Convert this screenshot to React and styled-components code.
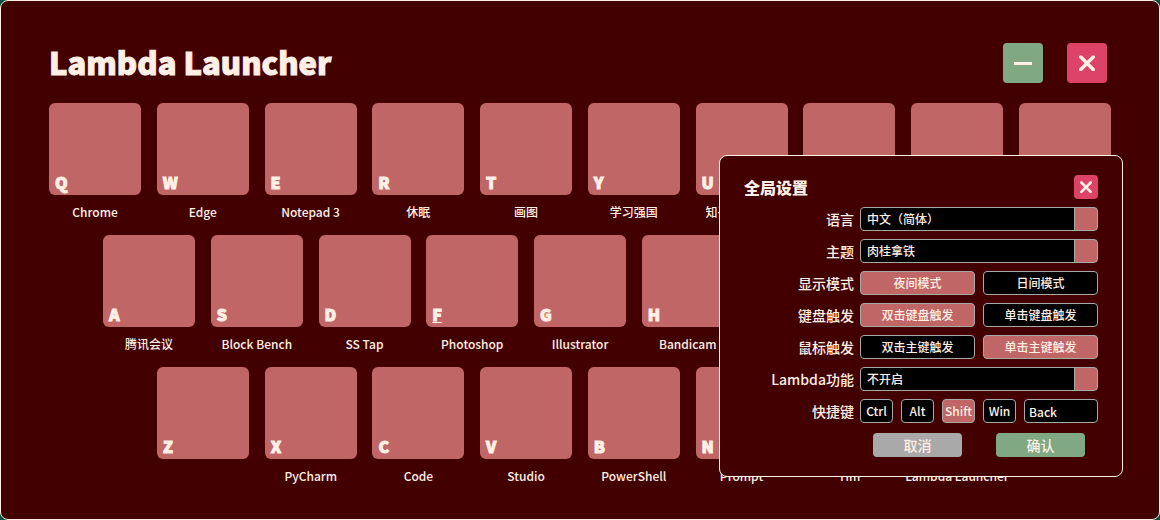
import React, { useState } from "react";
import styled, { createGlobalStyle, css } from "styled-components";

const color = {
  desktop: "#00543f",
  bg: "#420000",
  text: "#ffefe4",
  tile: "#c16666",
  green: "#7fa883",
  red: "#dd4267",
  grey: "#a9a9a9",
  field: "#000000",
};

const GlobalStyle = createGlobalStyle`
  *, *::before, *::after { box-sizing: border-box; }
  body {
    margin: 0;
    background: ${color.desktop};
    color: ${color.text};
    font-family: "Noto Sans CJK SC", "Noto Sans", sans-serif;
    font-size: 12px;
  }
  button, select, input { font: inherit; color: inherit; margin: 0; }
`;

const heavyText = css`
  font-weight: 900;
  -webkit-text-stroke: 1px currentColor;
  paint-order: stroke fill;
`;

const Window = styled.div`
  position: relative;
  min-height: 100vh;
  padding: 42px 48px 24px;
  background: ${color.bg};
  border: 1px solid ${color.text};
  border-radius: 8px;
  overflow: hidden;
`;

const TitleBar = styled.header`
  display: flex;
  align-items: flex-start;
  justify-content: space-between;
  height: 40px;
  margin-bottom: 20px;
  padding-right: 4px;
`;

const Title = styled.h1`
  ${heavyText}
  margin: 0;
  font-size: 31px;
  line-height: 38px;
  white-space: nowrap;
`;

const WindowControls = styled.div`
  display: flex;
  gap: 24px;
`;

const IconButton = styled.button`
  display: grid;
  place-items: center;
  width: ${(p) => p.$size}px;
  height: ${(p) => p.$size}px;
  padding: 0;
  border: 0;
  border-radius: 4px;
  background: ${(p) => color[p.$tone]};
  cursor: pointer;
`;

const Keyboard = styled.main`
  display: flex;
  flex-direction: column;
  gap: 13px;
`;

const KeyRow = styled.div`
  display: flex;
  justify-content: space-between;
  padding: 0 ${(p) => p.$indent * 54}px;
`;

const KeyCell = styled.div`
  display: flex;
  flex-direction: column;
  align-items: center;
  gap: 7px;
  width: 92px;
`;

const KeyTile = styled.button`
  ${heavyText}
  display: flex;
  align-items: flex-end;
  width: 92px;
  height: 92px;
  padding: 0 6px 3px;
  border: 0;
  border-radius: 6px;
  background: ${color.tile};
  font-size: 16px;
  line-height: 20px;
  cursor: pointer;
`;

const Letter = styled.span`
  ${(p) => p.$home && css`text-decoration: underline;`}
`;

const KeyName = styled.span`
  height: 20px;
  line-height: 20px;
  font-weight: 500;
  white-space: nowrap;
`;

const Dialog = styled.section`
  position: absolute;
  right: 36px;
  bottom: 42px;
  width: 404px;
  padding: 19px 24px;
  background: ${color.bg};
  border: 1px solid ${color.text};
  border-radius: 8px;
`;

const DialogHeader = styled.div`
  display: flex;
  align-items: center;
  justify-content: space-between;
  margin-bottom: 8px;
`;

const DialogTitle = styled.h2`
  margin: 0;
  font-size: 16px;
  line-height: 24px;
  font-weight: 900;
`;

const Form = styled.form`
  display: flex;
  flex-direction: column;
  gap: 8px;
`;

const Field = styled.div`
  display: grid;
  grid-template-columns: 1fr 238px;
  column-gap: 6px;
`;

const labelText = css`
  font-size: 14px;
  line-height: 24px;
  font-weight: 500;
  text-align: right;
`;

const FieldLabel = styled.label`
  ${labelText}
`;

const GroupLabel = styled.span`
  ${labelText}
`;

const control = css`
  height: 24px;
  border: 1px solid ${color.grey};
  border-radius: 4px;
  font-size: 12px;
  line-height: 22px;
  font-weight: 500;
`;

const Select = styled.select`
  ${control}
  appearance: none;
  width: 100%;
  padding: 0 30px 0 6px;
  background: linear-gradient(
    to left,
    ${color.tile} 22px,
    ${color.grey} 22px 23px,
    ${color.field} 23px
  );
`;

const Options = styled.div`
  display: flex;
  gap: 8px;
`;

const Choice = styled.button`
  ${control}
  flex: ${(p) => (p.$compact ? "0 0 33px" : "1")};
  padding: 0;
  background: ${(p) => (p.$active ? color.tile : color.field)};
  white-space: nowrap;
  cursor: pointer;
`;

const KeyInput = styled.input`
  ${control}
  flex: 1;
  min-width: 0;
  padding: 0 4px;
  background: ${color.field};
`;

const Actions = styled.div`
  display: flex;
  gap: 34px;
  width: 238px;
  margin: 2px 0 0 auto;
  padding: 0 13px;
`;

const ActionButton = styled.button`
  flex: 1;
  height: 24px;
  padding: 0;
  border: 0;
  border-radius: 4px;
  background: ${(p) => color[p.$tone]};
  font-size: 14px;
  line-height: 24px;
  font-weight: 500;
  cursor: pointer;
`;

function CrossIcon({ size }) {
  return (
    <svg width={size} height={size} viewBox="0 0 16 16" aria-hidden="true">
      <path d="M1.8 2 14.2 14.6M14.2 2 1.8 14.6" stroke={color.text} strokeWidth="3.5" strokeLinecap="round" />
    </svg>
  );
}

function MinusIcon() {
  return (
    <svg width="18" height="18" viewBox="0 0 18 18" aria-hidden="true">
      <rect x="0" y="8" width="18" height="3" fill={color.text} />
    </svg>
  );
}

const rows = [
  [
    ["Q", "Chrome"], ["W", "Edge"], ["E", "Notepad 3"], ["R", "休眠"], ["T", "画图"],
    ["Y", "学习强国"], ["U", "知乎日报助手"], ["I", ""], ["O", ""], ["P", ""],
  ],
  [
    ["A", "腾讯会议"], ["S", "Block Bench"], ["D", "SS Tap"], ["F", "Photoshop"],
    ["G", "Illustrator"], ["H", "Bandicam"], ["J", ""], ["K", ""], ["L", ""],
  ],
  [
    ["Z", ""], ["X", "PyCharm"], ["C", "Code"], ["V", "Studio"], ["B", "PowerShell"],
    ["N", "Prompt"], ["M", "Tim"], ["", "Lambda Launcher"],
  ],
];

function SelectField({ id, label, value }) {
  return (
    <Field>
      <FieldLabel htmlFor={id}>{label}</FieldLabel>
      <Select id={id} defaultValue={value}>
        <option>{value}</option>
      </Select>
    </Field>
  );
}

function ChoiceField({ id, label, options, initial }) {
  const [active, setActive] = useState(initial);
  return (
    <Field role="group" aria-labelledby={id}>
      <GroupLabel id={id}>{label}</GroupLabel>
      <Options>
        {options.map((name, i) => (
          <Choice key={name} type="button" $active={i === active} aria-pressed={i === active} onClick={() => setActive(i)}>
            {name}
          </Choice>
        ))}
      </Options>
    </Field>
  );
}

function HotkeyField() {
  const [mods, setMods] = useState(["Shift"]);
  const toggle = (m) => setMods(mods.includes(m) ? mods.filter((x) => x !== m) : [...mods, m]);
  return (
    <Field>
      <FieldLabel htmlFor="hotkey">快捷键</FieldLabel>
      <Options>
        {["Ctrl", "Alt", "Shift", "Win"].map((m) => (
          <Choice key={m} type="button" $compact $active={mods.includes(m)} aria-pressed={mods.includes(m)} onClick={() => toggle(m)}>
            {m}
          </Choice>
        ))}
        <KeyInput id="hotkey" type="text" defaultValue="Back" />
      </Options>
    </Field>
  );
}

export default function App() {
  return (
    <>
      <GlobalStyle />
      <Window>
        <TitleBar>
          <Title>Lambda Launcher</Title>
          <WindowControls>
            <IconButton $size={40} $tone="green" aria-label="Minimize"><MinusIcon /></IconButton>
            <IconButton $size={40} $tone="red" aria-label="Close"><CrossIcon size={16} /></IconButton>
          </WindowControls>
        </TitleBar>
        <Keyboard>
          {rows.map((row, i) => (
            <KeyRow key={i} $indent={i}>
              {row.map(([letter, name]) => (
                <KeyCell key={letter}>
                  <KeyTile aria-label={name || letter}><Letter $home={letter === "F"}>{letter}</Letter></KeyTile>
                  <KeyName>{name}</KeyName>
                </KeyCell>
              ))}
            </KeyRow>
          ))}
        </Keyboard>
        <Dialog role="dialog" aria-labelledby="settings-title">
          <DialogHeader>
            <DialogTitle id="settings-title">全局设置</DialogTitle>
            <IconButton $size={24} $tone="red" aria-label="Close settings"><CrossIcon size={12} /></IconButton>
          </DialogHeader>
          <Form onSubmit={(e) => e.preventDefault()}>
            <SelectField id="language" label="语言" value="中文（简体）" />
            <SelectField id="theme" label="主题" value="肉桂拿铁" />
            <ChoiceField id="display" label="显示模式" options={["夜间模式", "日间模式"]} initial={0} />
            <ChoiceField id="keyboard" label="键盘触发" options={["双击键盘触发", "单击键盘触发"]} initial={0} />
            <ChoiceField id="mouse" label="鼠标触发" options={["双击主键触发", "单击主键触发"]} initial={1} />
            <SelectField id="lambda" label="Lambda功能" value="不开启" />
            <HotkeyField />
            <Actions>
              <ActionButton type="button" $tone="grey">取消</ActionButton>
              <ActionButton type="submit" $tone="green">确认</ActionButton>
            </Actions>
          </Form>
        </Dialog>
      </Window>
    </>
  );
}
